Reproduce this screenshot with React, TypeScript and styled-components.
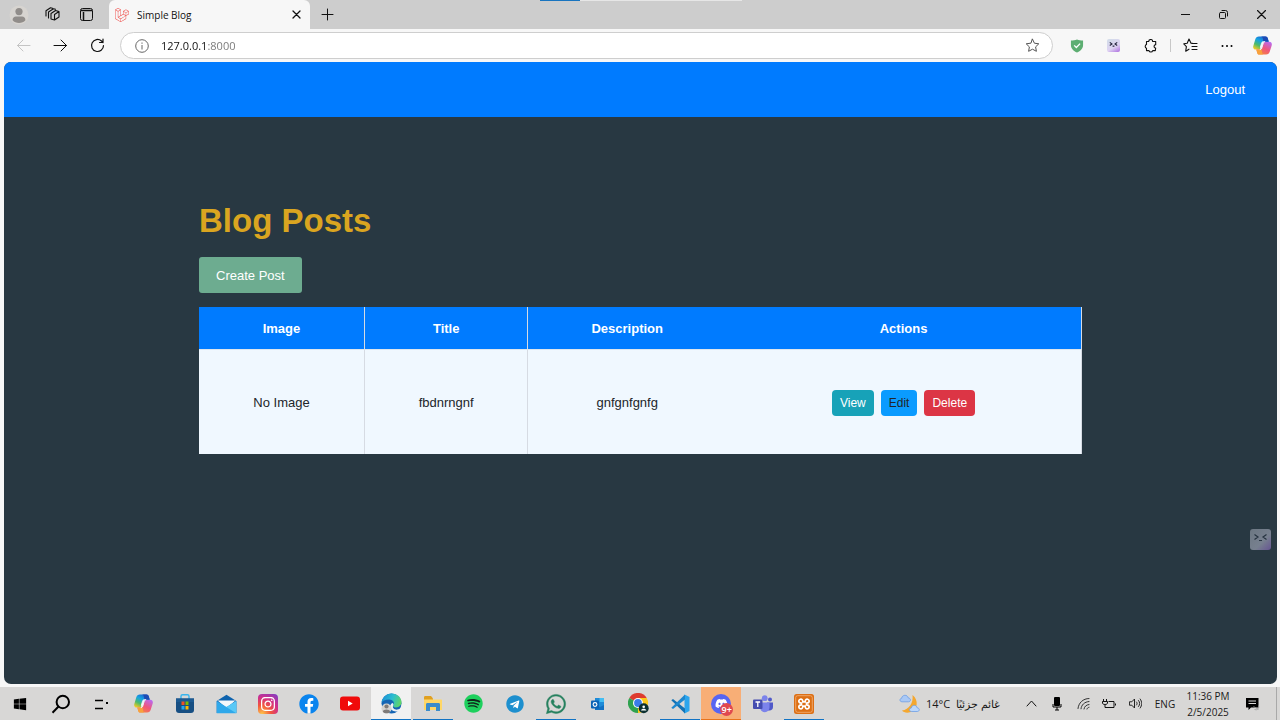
import React from 'react';
import styled, { createGlobalStyle, css } from 'styled-components';
import { FaWindows, FaInstagram, FaFacebook, FaSpotify, FaTelegram, FaWhatsapp, FaDiscord } from 'react-icons/fa';
import { SiLaravel } from 'react-icons/si';

const chromeFont = `'Open Sans', 'Noto Sans', sans-serif`;
const pageFont = `'Liberation Sans', Arial, sans-serif`;

const GlobalStyle = createGlobalStyle`
  *, *::before, *::after { box-sizing: border-box; }
  body { margin: 0; background: #f7f7f7; font-family: ${chromeFont}; }
  button { font: inherit; color: inherit; border: 0; padding: 0; background: none; cursor: pointer; }
  svg { display: block; flex: none; }
`;

const Desktop = styled.div`
  display: flex;
  flex-direction: column;
  min-height: 100vh;
`;

/* ---------- browser window ---------- */

const TitleBar = styled.header`
  position: relative;
  display: flex;
  align-items: stretch;
  height: 29px;
  background: #cdcdcd;
`;

const LoadStrip = styled.div`
  position: absolute;
  top: 0;
  left: 50%;
  width: 202px;
  height: 1px;
  margin-left: -100px;
  background: linear-gradient(to right, #1874bf 40px, #e6e6e6 40px);
`;

const IconButton = styled.button<{ $w: number }>`
  display: flex;
  flex: none;
  align-items: center;
  justify-content: center;
  width: ${(p) => p.$w}px;
`;

const WindowTools = styled.div`
  display: flex;
  padding: 0 5px 0 2px;
`;

const Tab = styled.div`
  display: flex;
  align-items: center;
  width: 201px;
  padding: 0 6px;
  border-radius: 6px 6px 0 0;
  background: #f7f7f7;
  font-size: 10px;
  color: #111;
`;

const TabTitle = styled.span`
  flex: 1;
  padding-left: 8px;
`;

const Spacer = styled.div`
  flex: 1;
`;

const Toolbar = styled.div`
  display: flex;
  align-items: center;
  height: 33px;
  padding: 0 1px 0 5px;
  background: #f7f7f7;
`;

const Address = styled.label`
  display: flex;
  flex: 1;
  align-items: center;
  height: 27px;
  margin: 0 6px 0 4px;
  padding: 0 12px 0 14px;
  border: 1px solid #cecece;
  border-radius: 14px;
  background: #fff;
`;

const AddressInput = styled.input`
  flex: 1;
  min-width: 0;
  margin-left: 12px;
  padding: 0;
  border: 0;
  outline: 0;
  font: 11px/20px ${chromeFont};
  color: transparent;
  background: linear-gradient(to right, #111 45px, #777 45px);
  background-clip: text;
  -webkit-background-clip: text;
`;

const ToolDivider = styled.div`
  width: 1px;
  height: 13px;
  background: #c8c8c8;
`;

/* ---------- blog page ---------- */

const Viewport = styled.div`
  position: relative;
  display: flex;
  flex: 1;
  flex-direction: column;
  margin: 0 3px 3px 4px;
  border-radius: 7px;
  overflow: hidden;
  background: #283842;
  font-family: ${pageFont};
  font-size: 13px;
`;

const NavBar = styled.nav`
  display: flex;
  align-items: center;
  justify-content: flex-end;
  height: 55px;
  padding: 0 32px;
  background: #007bff;
`;

const LogoutButton = styled.button`
  font-size: 13px;
  color: #fff;
`;

const Main = styled.main`
  width: 100%;
  max-width: 883px;
  margin: 0 auto;
  padding: 84px 0;
`;

const Heading = styled.h1`
  margin: 0 0 16px;
  font-size: 33px;
  line-height: 40px;
  color: #daa520;
`;

const CreateLink = styled.a`
  display: inline-flex;
  align-items: center;
  height: 36px;
  margin-bottom: 14px;
  padding: 0 17px;
  border-radius: 3px;
  background: #6dac90;
  color: #fff;
  text-decoration: none;
  vertical-align: top;
`;

const PostTable = styled.table`
  width: 100%;
  table-layout: fixed;
  border-spacing: 0;
  background: #f0f8ff;
  color: #212529;
  text-align: center;
`;

const cell = css<{ $divided?: boolean }>`
  padding: 0;
  border-right: ${(p) => (p.$divided ? '1px solid #d6dbe3' : '0')};
`;

const HeadCell = styled.th<{ $divided?: boolean; $share: number }>`
  ${cell}
  width: ${(p) => p.$share}%;
  height: 43px;
  border-bottom: 1px solid #dee6ee;
  background: #007bff;
  color: #fff;
`;

const Cell = styled.td<{ $divided?: boolean }>`
  ${cell}
  height: 104px;
`;

const Actions = styled.div`
  display: flex;
  justify-content: center;
  gap: 7px;
  padding-top: 2px;
`;

const tones = {
  view: ['#17a2b8', '#fff'],
  edit: ['#0a9bff', '#212529'],
  remove: ['#dc3545', '#fff'],
};

const ActionButton = styled.button<{ $tone: keyof typeof tones }>`
  height: 26px;
  padding: 0 8px;
  border-radius: 4px;
  font-size: 12px;
  background: ${(p) => tones[p.$tone][0]};
  color: ${(p) => tones[p.$tone][1]};
`;

const FloatingHelper = styled.button`
  position: absolute;
  top: 75%;
  right: 6px;
  width: 21px;
  height: 21px;
  border-radius: 3px;
  background: linear-gradient(135deg, #6c7782 0%, #77808f 60%, #665592 100%);
`;

/* ---------- taskbar ---------- */

const TaskBar = styled.footer`
  display: flex;
  height: 33px;
  background: #d8d7d6;
  color: #1a1a1a;
`;

const Apps = styled.div`
  display: grid;
  grid-template-columns: repeat(20, 1fr);
  width: 825px;
`;

const AppButton = styled.button<{ $bg?: string; $line?: string }>`
  display: flex;
  align-items: center;
  justify-content: center;
  width: 40px;
  padding-top: 1px;
  border-bottom: 1px solid ${(p) => p.$line ?? 'transparent'};
  background: ${(p) => p.$bg ?? 'transparent'};
`;

const SquareTile = styled.span<{ $bg: string; $round?: boolean }>`
  display: flex;
  align-items: center;
  justify-content: center;
  width: 20px;
  height: 20px;
  border-radius: ${(p) => (p.$round ? '50%' : '4px')};
  background: ${(p) => p.$bg};
  color: #fff;
`;

const WhiteCore = styled.span<{ $core: string }>`
  border-radius: 50%;
  background: radial-gradient(circle, ${(p) => p.$core} 60%, transparent 62%);
`;

const BadgeHolder = styled.span`
  position: relative;
`;

const Badge = styled.span`
  position: absolute;
  right: -2px;
  bottom: -2px;
  width: 13px;
  height: 13px;
  border-radius: 50%;
  background: #e0484f;
  color: #fff;
  font-size: 9px;
  font-weight: 600;
  line-height: 13px;
  text-align: center;
`;

const Weather = styled.button`
  display: flex;
  align-items: center;
  gap: 6px;
  margin-right: 18px;
  font-size: 11px;
  white-space: nowrap;
`;

const Temp = styled.span`
  font-size: 11px;
`;

const Language = styled.button`
  width: 34px;
  margin-right: 6px;
  font-size: 10px;
`;

const Clock = styled.time`
  display: flex;
  flex-direction: column;
  justify-content: center;
  align-items: center;
  width: 40px;
  font-size: 10px;
  line-height: 16px;
  white-space: nowrap;
`;

const DesktopEdge = styled.div`
  width: 1px;
  margin-right: 3px;
  background: #a9a9a9;
`;

/* ---------- drawings ---------- */

type LineProps = { size: number; d: string; color?: string; sw?: number };
const Line = ({ size, d, color = '#111', sw = 1 }: LineProps) => (
  <svg width={size} height={size} viewBox={`0 0 ${size} ${size}`} fill="none" stroke={color} strokeWidth={sw} strokeLinecap="round" strokeLinejoin="round">
    <path d={d} />
  </svg>
);

const Avatar = () => (
  <svg width="20" height="20" viewBox="0 0 20 20">
    <circle cx="10" cy="10" r="9.5" fill="#d7d4d0" />
    <circle cx="10" cy="6.6" r="3.6" fill="#918d8a" />
    <path d="M3.6 15.2c0-2.4 1.4-3.7 3.4-3.7h6c2 0 3.4 1.3 3.4 3.7-1.5 1.8-3.8 2.7-6.4 2.7s-4.9-.9-6.4-2.7z" fill="#918d8a" />
  </svg>
);

const Copilot = ({ id }: { id: string }) => (
  <svg width="19" height="19" viewBox="0 0 24 24">
    <defs>
      <linearGradient id={`${id}a`} x1=".8" y1="0" x2=".2" y2="1">
        <stop offset="0" stopColor="#1d54c8" />
        <stop offset=".4" stopColor="#16a3e3" />
        <stop offset=".7" stopColor="#4dba6b" />
        <stop offset="1" stopColor="#f2cb22" />
      </linearGradient>
      <linearGradient id={`${id}b`} x1=".8" y1="0" x2=".2" y2="1">
        <stop offset="0" stopColor="#b96af0" />
        <stop offset=".5" stopColor="#f0567b" />
        <stop offset="1" stopColor="#f68a3c" />
      </linearGradient>
    </defs>
    <path d="M7.500.5h8.200c1.800 0 2.600 1 3 2.500l1.200 4.200h-4.400c-1.700 0-2.600.8-3 2.300L10 17.200H3.500C.8 17.200-.3 15 .4 12.500L2.800 4.300C3.500 1.800 5 .5 7.500.5z" fill={`url(#${id}a)`} />
    <path d="M16.500 23.500H8.300c-1.800 0-2.600-1-3-2.500l-1.100-3.800h4.300c1.700 0 2.600-.8 3-2.300L14 7.200h6.500c2.700 0 3.800 2.200 3.100 4.700l-2.400 7.800c-.7 2.500-2.200 3.800-4.700 3.800z" fill={`url(#${id}b)`} />
    <path d="M12 .5h3.700c1.800 0 2.600 1 3 2.500l1.200 4.200h-4.400c-1 0-1.700.3-2.200.8L12.500 3c-.4-1.500-1-2.500-2.500-2.500z" fill="#1c4bb4" />
    <path d="M12 23.500H8.300c-1.800 0-2.600-1-3-2.500l-1.100-3.800h4.300c1 0 1.700-.3 2.200-.8l.9 4.600c.3 1.500 1 2.500 2.400 2.500z" fill="#f8a23c" />
    <path d="M12.500 7.200h2.800c-1.500.2-2.200 1-2.600 2.300l-1.700 6c-.4 1.200-1.200 1.700-2.300 1.700 1.300-.3 1.200-1.500.6-3.200l1.500-5c.3-1 .8-1.600 1.700-1.800z" fill="#f5f5fa" stroke="#f5f5fa" />
  </svg>
);

const Face = ({ dim }: { dim?: boolean }) => (
  <svg width={dim ? 21 : 13} height={dim ? 21 : 13} viewBox="0 0 21 21" fill="none" stroke={dim ? '#263340' : '#26263e'} strokeWidth={dim ? 1.2 : 1.8}>
    <path d="M4.500 5.500l3.500 2.500-3.500 2.500M16.500 5.500L13 8l3.500 2.500M9 11.500h3" />
  </svg>
);

const HelperTile = styled.span`
  display: flex;
  width: 13px;
  height: 13px;
  border-radius: 2px;
  background: linear-gradient(150deg, #d3dbe9 10%, #ded3f2 60%, #ac6be0 100%);
`;

const Shield = () => (
  <svg width="14" height="14" viewBox="0 0 14 15">
    <path d="M7 .5c2 .8 4 1.200 6.500 1.200v4.900c0 3.600-2.800 6-6.500 7.900C3.300 12.600.5 10.200.5 6.600V1.700C3 1.700 5 1.300 7 .5z" fill="#5dae72" />
    <path d="M4 6.800l2.300 2.300L10.300 5" fill="none" stroke="#fff" strokeWidth="1.400" />
  </svg>
);

const Search = () => (
  <svg width="20" height="20" viewBox="0 0 20 20" fill="none" stroke="#000" strokeWidth="2">
    <circle cx="11.800" cy="8" r="6.200" />
    <path d="M7.500 12.500L1.500 18.700" />
  </svg>
);

const TaskView = () => (
  <svg width="20" height="14" viewBox="0 0 20 14">
    <path d="M2 3.500h8M2 11.500h8" stroke="#000" strokeWidth="1.400" />
    <rect x="13" y="5" width="2" height="2" />
  </svg>
);

const Store = () => (
  <svg width="20" height="20" viewBox="0 0 20 20">
    <path d="M6 5V2.300C6 1.300 6.500.8 7.500.8h5c1 0 1.500.5 1.500 1.500V5" fill="none" stroke="#37b5ee" strokeWidth="1.400" />
    <path d="M1 4.500h18V16c0 1.800-1 3-3 3H4c-2 0-3-1.200-3-3z" fill="#174f83" />
    <path d="M1 4.500h18V8H1z" fill="#1c5a92" />
    <path d="M6.500 7.500h3v3.500h-3z" fill="#f25022" />
    <path d="M10.500 7.500h3v3.500h-3z" fill="#7fba00" />
    <path d="M6.500 12h3v3.500h-3z" fill="#22a7f0" />
    <path d="M10.500 12h3v3.500h-3z" fill="#ffb900" />
  </svg>
);

const Mail = () => (
  <svg width="21" height="20" viewBox="0 0 21 20">
    <path d="M.7 7L10.500.7 20.300 7v12H.7z" fill="#0f63ae" />
    <path d="M1.500 6.500h18L10.500 14z" fill="#f4f8fb" />
    <path d="M.7 7l9.800 6L20.300 7v12.300H.7z" fill="#2fa8ea" />
    <path d="M20.300 7v12.300L7 10.900l3.500 2.100z" fill="#59c8f6" />
  </svg>
);

const YouTube = () => (
  <svg width="20" height="15" viewBox="0 0 20 15">
    <rect width="20" height="14" y=".5" rx="3" fill="#f00b0b" />
    <path d="M8 4.700v5.600l4.700-2.800z" fill="#fff" />
  </svg>
);

const Edge = () => (
  <svg width="21" height="21" viewBox="0 0 21 21">
    <defs>
      <linearGradient id="edgeTop" x1="0" y1=".3" x2="1" y2=".6">
        <stop offset="0" stopColor="#1b8fd6" />
        <stop offset=".5" stopColor="#2bbdd0" />
        <stop offset="1" stopColor="#63d663" />
      </linearGradient>
    </defs>
    <circle cx="10.500" cy="10.500" r="10" fill="#1565b4" />
    <path d="M.5 10C1 4.500 5.300.5 10.500.5c5.700 0 10 4 10 8.600 0 3.200-2.300 5.300-5.600 5.300-2 0-3.400-.8-2.600-1.800 2-2.600-.3-6-4.200-6C4 6.600 1.200 8 .5 10z" fill="url(#edgeTop)" />
    <path d="M12.300 12.300c-1.500 2.700 1.200 4.700 4.200 4.300 1.500-.2 2.700-.8 3.500-1.500l1 1.500-3 2-3 0c-3.500-.5-6-2.200-5.900-5.100 0-1.700 1-3 2.500-3.600.8.600 1.200 1.500.7 2.400z" fill="#eef2f5" />
    <circle cx="5.500" cy="15.500" r="5" fill="#d6d3d0" />
    <circle cx="5.500" cy="13.500" r="2.100" fill="#7f7b79" />
    <path d="M1.800 18.800c.3-3.200 7-3.200 7.400 0-1.700 2-5.600 2-7.400 0z" fill="#7f7b79" />
  </svg>
);

const Explorer = () => (
  <svg width="20" height="17" viewBox="0 0 20 17">
    <path d="M1 2.500C1 1.500 1.500 1 2.400 1H8l2 2.500V6H1z" fill="#e0a020" />
    <path d="M1 4.500h17c.7 0 1 .4 1 1V15H1z" fill="#ffd766" />
    <path d="M3 16V9.500C3 8.600 3.500 8 4.500 8h11c1 0 1.500.6 1.500 1.500V16h-4v-4H7v4z" fill="#3b8ccb" />
  </svg>
);

const Outlook = () => (
  <svg width="14" height="14" viewBox="0 0 14 14">
    <path d="M4 1h9v11H4z" fill="#1e8bd8" />
    <path d="M8.500 1H13v4H8.500z" fill="#43bdf2" />
    <path d="M4 8l5 2 4-2v5H4z" fill="#1270c2" />
    <rect y="3.500" width="8" height="8" rx="1" fill="#0c62b5" />
    <circle cx="4" cy="7.500" r="1.900" fill="none" stroke="#fff" strokeWidth="1.100" />
  </svg>
);

const Chrome = () => (
  <svg width="21" height="21" viewBox="0 0 21 21">
    <path d="M10 10L1.300 5A10 10 0 0118.700 5z" fill="#de3b2f" />
    <path d="M10 10L1.300 5A10 10 0 0010 20l4.500-7.500z" fill="#2fa24f" />
    <path d="M10 10V5h8.700A10 10 0 0110 20z" fill="#fbc81c" />
    <circle cx="10" cy="10" r="5" fill="#fff" />
    <circle cx="10" cy="10" r="3.900" fill="#3a7ce8" />
    <circle cx="15.700" cy="15.200" r="5" fill="#0c3030" />
    <circle cx="15.700" cy="13.800" r="1.300" fill="#fff" />
    <path d="M13 17.500c.4-2.300 5-2.300 5.400 0z" fill="#fff" />
  </svg>
);

const Code = () => (
  <svg width="20" height="20" viewBox="0 0 20 20">
    <path d="M14.500.5L19.500 3v14l-5 2.500z" fill="#2ba5ed" />
    <path d="M1.300 6.300L3 5l12 9.500v5z" fill="#1272b5" />
    <path d="M1.300 13.700L3 15 15 5.500v-5z" fill="#1c87cf" />
  </svg>
);

const Teams = () => (
  <svg width="20" height="18" viewBox="0 0 20 18">
    <circle cx="17" cy="4.500" r="2" fill="#5059c9" />
    <path d="M14 7.500h6V12c0 2-1.500 3.500-3.500 3.500H14z" fill="#5059c9" />
    <circle cx="11.700" cy="3.200" r="2.900" fill="#7b83eb" />
    <path d="M7 7.500h9.500V12c0 3-2 5.200-4.700 5.200S7 15 7 12z" fill="#7b83eb" />
    <rect y="4.500" width="9.500" height="9.500" rx="1" fill="#444cb0" />
    <path d="M2.500 7h4.600M4.800 7v5" stroke="#fff" strokeWidth="1.300" />
  </svg>
);

const Xampp = () => (
  <svg width="20" height="20" viewBox="0 0 20 20">
    <rect width="20" height="20" rx="2.500" fill="#dd6f14" />
    <rect x="1.700" y="1.700" width="16.600" height="16.600" rx="2" fill="none" stroke="#f3b47c" strokeWidth=".8" />
    <path
      d="M6.300 5.200a2 2 0 00-1 3.200c.5.600 1.300.7 2.200.7v1.800c-.9 0-1.700.1-2.200.7a2 2 0 001 3.200c1.600.4 2.700-.9 2.500-2.700h2.400c-.2 1.800.9 3.100 2.500 2.700a2 2 0 001-3.200c-.5-.6-1.300-.7-2.200-.7V9.100c.9 0 1.700-.1 2.200-.7a2 2 0 00-1-3.200c-1.600-.4-2.700.9-2.500 2.700H8.800C9 6.100 7.900 4.800 6.300 5.200z"
      fill="none"
      stroke="#fff"
      strokeWidth="1.700"
    />
  </svg>
);

const WeatherIcon = () => (
  <svg width="21" height="20" viewBox="0 0 21 20">
    <path d="M13.500 1c6.500 5 5.500 15-2.500 17.300-3.500 1-6.500 0-8-1.800C10 15.500 14.500 9 13.500 1z" fill="#f4a72f" />
    <path d="M3 7.800C.4 7.800.3 4.500 2.600 4.300 3 .5 8.600.2 9.300 4c3 .1 2.700 3.800.2 3.800z" fill="#a9c8f5" stroke="#6d9ee6" strokeWidth=".8" />
    <path d="M12.500 17.500c-2.700 0-2.700-3.500-.2-3.500.6-3.700 5.300-3.400 6 0 2.700 0 2.500 3.500 0 3.500z" fill="#bcd7fa" stroke="#6d9ee6" strokeWidth=".8" />
  </svg>
);

const Mic = () => (
  <svg width="10" height="14" viewBox="0 0 10 14">
    <rect x="2" y="0" width="6" height="9" rx="1" />
    <path d="M1 7v3h8V7M5 10v3M3 13h4" fill="none" stroke="#000" />
  </svg>
);

const Battery = () => (
  <svg width="14" height="12" viewBox="0 0 14 12" fill="none" stroke="#111">
    <path d="M6.500 3.500h5.500v6H4M13.500 5.500v2M1.500 1v2M4.500 1v2M.5 3.500h5v1.500c0 2-5 2-5 0zM3 6.500v3h1.500" />
  </svg>
);

const Notice = () => (
  <svg width="15" height="14" viewBox="0 0 15 14">
    <path d="M1 1h12.500v9.500H6L3.500 13v-2.500H1z" />
    <path d="M3.500 4h7.500M3.500 6.500h7.500" stroke="#d8d7d6" />
    <path d="M8.500 9.500l5 3M13.500 8.500a3 3 0 01-4 4" fill="none" stroke="#9a9a9a" strokeWidth=".8" />
  </svg>
);

const blue = '#1173c4';

const apps: { name: string; icon: React.ReactNode; bg?: string; line?: string }[] = [
  { name: 'Start', icon: <FaWindows size={14} color="#000" /> },
  { name: 'Search', icon: <Search /> },
  { name: 'Task view', icon: <TaskView /> },
  { name: 'Copilot', icon: <Copilot id="task" /> },
  { name: 'Store', icon: <Store /> },
  { name: 'Mail', icon: <Mail /> },
  {
    name: 'Instagram',
    icon: (
      <SquareTile $bg="radial-gradient(circle at 20% 100%, #fdc64a 0%, #f2553c 35%, #cf2f8b 65%, #7340cd 100%)">
        <FaInstagram size={16} />
      </SquareTile>
    ),
  },
  { name: 'Facebook', icon: <WhiteCore $core="#fff"><FaFacebook size={20} color="#0a84ee" /></WhiteCore> },
  { name: 'YouTube', icon: <YouTube /> },
  { name: 'Edge', icon: <Edge />, bg: '#f1f1f1', line: blue },
  { name: 'File Explorer', icon: <Explorer />, line: blue },
  { name: 'Spotify', icon: <WhiteCore $core="#10251a"><FaSpotify size={19} color="#1ed05d" /></WhiteCore> },
  { name: 'Telegram', icon: <WhiteCore $core="#fff"><FaTelegram size={18} color="#1d8fce" /></WhiteCore> },
  { name: 'WhatsApp', icon: <FaWhatsapp size={22} color="#25805e" stroke="#25805e" strokeWidth={10} />, line: blue },
  { name: 'Outlook', icon: <Outlook /> },
  { name: 'Chrome', icon: <Chrome /> },
  { name: 'Visual Studio Code', icon: <Code />, line: blue },
  {
    name: 'Discord',
    icon: (
      <BadgeHolder>
        <SquareTile $bg="#5865f2" $round>
          <FaDiscord size={13} />
        </SquareTile>
        <Badge>9+</Badge>
      </BadgeHolder>
    ),
    bg: '#f8ae76',
    line: '#e8731c',
  },
  { name: 'Teams', icon: <Teams /> },
  { name: 'XAMPP', icon: <Xampp />, line: blue },
];

const columns = [
  { label: 'Image', share: 18.8, divided: true },
  { label: 'Title', share: 18.5, divided: true },
  { label: 'Description', share: 22.4, divided: false },
  { label: 'Actions', share: 40.3, divided: true },
];

const starPath = 'M7.500 1.200l1.900 4 4.400.6-3.200 3.100.8 4.400-3.900-2.100-3.900 2.100.8-4.400L1.200 5.800l4.400-.6z';

export default function App() {
  return (
    <Desktop>
      <GlobalStyle />
      <TitleBar>
        <LoadStrip />
        <WindowTools>
          <IconButton $w={33} aria-label="Profile"><Avatar /></IconButton>
          <IconButton $w={34} aria-label="Workspaces">
            <Line size={15} sw={1.1} d="M6 6.500l4.500-3 3.500 1v5.500l-4.500 3L6 12zM9.500 7.500L14 4.500M9.500 7.500V13M3.500 11V5L8.500 1.800l2 .5M1 9V3.800L5.500.8l2 .5" />
          </IconButton>
          <IconButton $w={35} aria-label="Tab actions">
            <svg width="13" height="13" viewBox="0 0 13 13" fill="none" stroke="#111">
              <rect x=".5" y=".5" width="12" height="12" rx="2" />
              <path d="M1 2.500h11M3.500 4v8.500" strokeWidth="1.500" />
            </svg>
          </IconButton>
        </WindowTools>
        <Tab>
          <SiLaravel size={14} color="#ee4440" />
          <TabTitle>Simple Blog</TabTitle>
          <IconButton $w={16} aria-label="Close tab"><Line size={9} sw={1.3} d="M1 1l7 7M8 1L1 8" /></IconButton>
        </Tab>
        <IconButton $w={34} aria-label="New tab"><Line size={13} d="M6.500 1v11M1 6.500h11" /></IconButton>
        <Spacer />
        <IconButton $w={38} aria-label="Minimize"><Line size={9} d="M0 4.500h9" /></IconButton>
        <IconButton $w={38} aria-label="Restore"><Line size={9} d="M1.500 2.500h4a1 1 0 011 1v4a1 1 0 01-1 1h-4a1 1 0 01-1-1v-4a1 1 0 011-1zM3 .5h3.500a2 2 0 012 2V6" /></IconButton>
        <IconButton $w={38} aria-label="Close window"><Line size={9} sw={1.2} d="M.5.5l8 8M8.500.5l-8 8" /></IconButton>
      </TitleBar>

      <Toolbar>
        <IconButton $w={37} aria-label="Back"><Line size={15} color="#c4c4c4" d="M14 7.500H1.500M7 2L1.500 7.500 7 13" /></IconButton>
        <IconButton $w={37} aria-label="Forward"><Line size={15} d="M1 7.500h12.500M8 2l5.500 5.500L8 13" /></IconButton>
        <IconButton $w={37} aria-label="Reload"><Line size={15} sw={1.2} d="M13.500 7.500a6 6 0 11-2-4.500l1.500 1.500M13 1v3.500H9.500" /></IconButton>
        <Address>
          <svg width="14" height="14" viewBox="0 0 14 14" fill="none" stroke="#666">
            <circle cx="7" cy="7" r="6.300" />
            <path d="M7 6v4.500M7 3.500v1.300" />
          </svg>
          <AddressInput aria-label="Address" defaultValue="127.0.0.1:8000" />
          <Line size={15} color="#555" d={starPath} />
        </Address>
        <IconButton $w={36} aria-label="Ad blocker"><Shield /></IconButton>
        <IconButton $w={37} aria-label="Assistant"><HelperTile><Face /></HelperTile></IconButton>
        <IconButton $w={38} aria-label="Extensions">
          <Line size={14} sw={1.1} d="M2.500 2.500h2.200a2 2 0 014 0h3v3.300h-.5a1.700 1.700 0 000 3.200h.5l-.4 2.600H8.700a1.900 1.900 0 01-3.700 0H2.500V9.200a1.900 1.900 0 010-3.600z" />
        </IconButton>
        <ToolDivider />
        <IconButton $w={38} aria-label="Favorites">
          <Line size={15} sw={1.1} d="M9.500 5.200H8L6 1 4.200 5.200.8 5.800l2.600 2.900-.7 4.500L6 11.200M9 5.500h5M9 8.500h5M9 11.500h5" />
        </IconButton>
        <IconButton $w={36} aria-label="More">
          <svg width="12" height="4" viewBox="0 0 12 4"><circle cx="1.500" cy="2" r="1" /><circle cx="6" cy="2" r="1" /><circle cx="10.500" cy="2" r="1" /></svg>
        </IconButton>
        <IconButton $w={34} aria-label="Copilot"><Copilot id="bar" /></IconButton>
      </Toolbar>

      <Viewport>
        <NavBar><LogoutButton>Logout</LogoutButton></NavBar>
        <Main>
          <Heading>Blog Posts</Heading>
          <CreateLink href="#create">Create Post</CreateLink>
          <PostTable>
            <thead>
              <tr>
                {columns.map((c) => (
                  <HeadCell key={c.label} $share={c.share} $divided={c.divided}>{c.label}</HeadCell>
                ))}
              </tr>
            </thead>
            <tbody>
              <tr>
                <Cell $divided>No Image</Cell>
                <Cell $divided>fbdnrngnf</Cell>
                <Cell>gnfgnfgnfg</Cell>
                <Cell $divided>
                  <Actions>
                    <ActionButton $tone="view">View</ActionButton>
                    <ActionButton $tone="edit">Edit</ActionButton>
                    <ActionButton $tone="remove">Delete</ActionButton>
                  </Actions>
                </Cell>
              </tr>
            </tbody>
          </PostTable>
        </Main>
        <FloatingHelper aria-label="Assistant"><Face dim /></FloatingHelper>
      </Viewport>

      <TaskBar>
        <Apps>
          {apps.map((a) => (
            <AppButton key={a.name} aria-label={a.name} $bg={a.bg} $line={a.line}>{a.icon}</AppButton>
          ))}
        </Apps>
        <Spacer />
        <Weather>
          <WeatherIcon />
          <Temp>14°C</Temp>
          <span lang="ar" dir="rtl">غائم جزئيًا</span>
        </Weather>
        <IconButton $w={26} aria-label="Hidden icons"><Line size={11} d="M1 8l4.500-5L10 8" /></IconButton>
        <IconButton $w={26} aria-label="Microphone"><Mic /></IconButton>
        <IconButton $w={26} aria-label="Network">
          <Line size={13} color="#333" d="M1 11.500C1.500 6 6 1.500 12 1.500M4 11.800C4.300 8 7.500 4.800 12 4.500M7 12c.3-2.300 2.300-4.300 5-4.500M10 12c.2-.8.9-1.500 2-1.700" />
        </IconButton>
        <IconButton $w={26} aria-label="Battery"><Battery /></IconButton>
        <IconButton $w={26} aria-label="Volume">
          <Line size={13} color="#222" d="M.8 4.800h2L5.500 2v9L2.800 8.200h-2zM7.500 5c.8.900.8 2.100 0 3M9.500 3.500c1.600 1.800 1.600 4.200 0 6M11.200 2c2 2.700 2 6.300 0 9" />
        </IconButton>
        <Language>ENG</Language>
        <Clock dateTime="2025-02-05T23:36">
          <span>11:36 PM</span>
          <span>2/5/2025</span>
        </Clock>
        <IconButton $w={48} aria-label="Notifications"><Notice /></IconButton>
        <DesktopEdge />
      </TaskBar>
    </Desktop>
  );
}
